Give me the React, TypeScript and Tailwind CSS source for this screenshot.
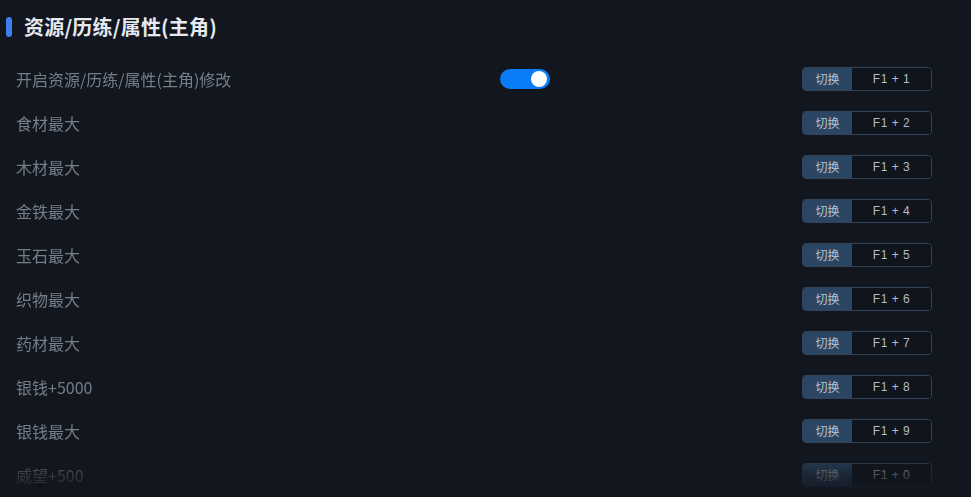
import { useState } from 'react'

const rows = [
  { label: '开启资源/历练/属性(主角)修改', key: 'F1 + 1', toggle: true },
  { label: '食材最大', key: 'F1 + 2' },
  { label: '木材最大', key: 'F1 + 3' },
  { label: '金铁最大', key: 'F1 + 4' },
  { label: '玉石最大', key: 'F1 + 5' },
  { label: '织物最大', key: 'F1 + 6' },
  { label: '药材最大', key: 'F1 + 7' },
  { label: '银钱+5000', key: 'F1 + 8' },
  { label: '银钱最大', key: 'F1 + 9' },
  { label: '威望+500', key: 'F1 + 0' },
]

function Toggle() {
  const [on, setOn] = useState(true)
  return (
    <button
      type="button"
      onClick={() => setOn(v => !v)}
      className={`relative block h-5 w-[50px] rounded-full ${on ? 'bg-[#0a7cf5]' : 'bg-[#3a4250]'}`}
    >
      <span className={`absolute top-[2px] h-4 w-4 rounded-full bg-white ${on ? 'right-[3px]' : 'left-[3px]'}`} />
    </button>
  )
}

export default function App() {
  return (
    <div
      className="h-[497px] w-[971px] overflow-hidden bg-[#12161f]"
      style={{ fontFamily: '"Noto Sans CJK SC", "Noto Sans", sans-serif' }}
    >
      <div className="flex items-center gap-3 pl-[6px] pt-[17px]">
        <div className="h-5 w-[6px] rounded-full bg-[#3f7ef0]" />
        <h1 className="text-[20px] font-bold leading-5 tracking-[0.2px] text-[#e6e9ee]">资源/历练/属性(主角)</h1>
      </div>

      <div className="mt-5 flex flex-col [mask-image:linear-gradient(to_bottom,black_calc(100%-44px),rgba(0,0,0,0.35)_calc(100%-22px),transparent_100%)]">
        {rows.map(r => (
          <div key={r.key} className="flex h-[44px] items-center pl-4 pr-[39px]">
            <span className="flex-1 text-[16px] text-[#767d87]">{r.label}</span>
            {r.toggle && <div className="mr-[252px] flex items-center"><Toggle /></div>}
            <div className="flex h-6 w-[130px] overflow-hidden rounded-[4px] border border-[#34455a] text-[12px]">
              <span className="flex w-[49px] items-center justify-center bg-[#2b4662] text-[#b9c3cf]">切换</span>
              <span className="flex flex-1 items-center justify-center bg-[#10141c] tracking-[0.5px] text-[#b4bcc6]" style={{ fontFamily: '"Liberation Sans", sans-serif' }}>{r.key}</span>
            </div>
          </div>
        ))}
      </div>
    </div>
  )
}
